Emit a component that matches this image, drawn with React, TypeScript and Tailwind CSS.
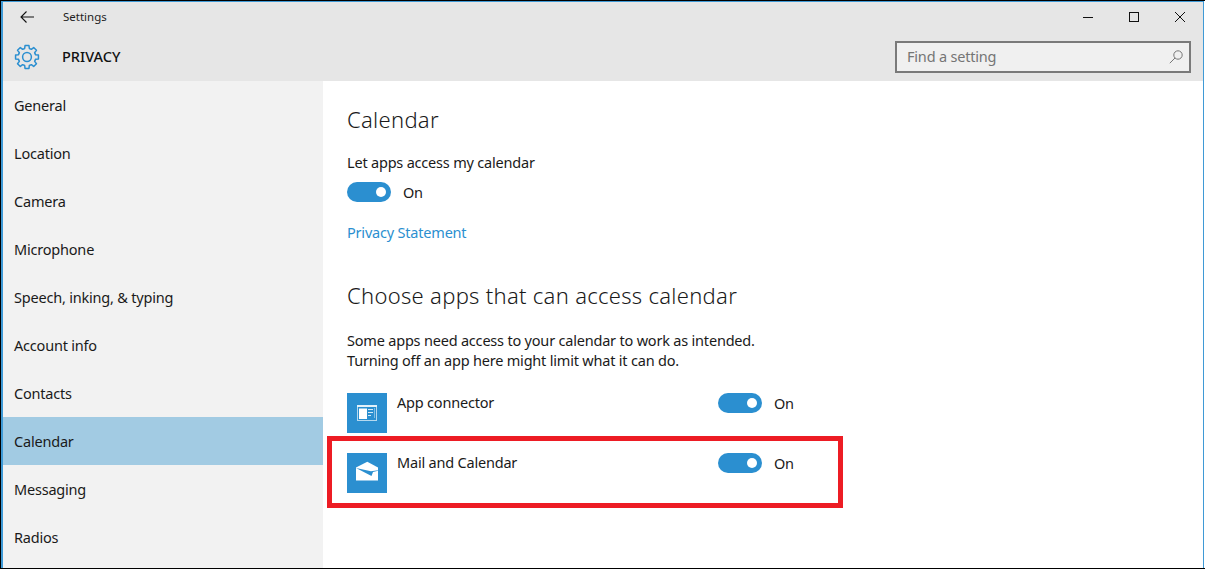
const nav = ["General","Location","Camera","Microphone","Speech, inking, & typing","Account info","Contacts","Calendar","Messaging","Radios"];

const gearPath = (() => {
  const pts: string[] = [];
  const rIn = 8.8;
  const rOut = 11.6;
  for (let i = 0; i < 8; i++) {
    const a = (i * Math.PI) / 4;
    const offs: [number, number][] = [[rIn, -0.27], [rOut, -0.17], [rOut, 0.17], [rIn, 0.27]];
    for (const [r, d] of offs) {
      pts.push(`${(13 + r * Math.cos(a + d)).toFixed(2)} ${(13 + r * Math.sin(a + d)).toFixed(2)}`);
    }
  }
  return `M${pts.join("L")}Z`;
})();

function Toggle() {
  return (
    <div className="flex h-[20px] items-center">
      <div className="flex h-[20px] w-[44px] items-center justify-end rounded-full bg-[#2b8fd0] pr-[5px]">
        <div className="h-[10px] w-[10px] rounded-full bg-white" />
      </div>
      <span className="ml-[12px] text-[14.5px] leading-[20px] tracking-[-0.2px] text-[#1a1a1a]">On</span>
    </div>
  );
}

function AppRow({ name, icon }: { name: string; icon: React.ReactNode }) {
  return (
    <div className="flex h-[40px] items-start">
      <div className="h-[40px] w-[40px] bg-[#2b8fd0]">{icon}</div>
      <div className="ml-[10px] w-[321px] text-[14.5px] leading-[19px] tracking-[-0.2px] text-[#1a1a1a]">{name}</div>
      <Toggle />
    </div>
  );
}

const connectorIcon = (
  <svg width="40" height="40" viewBox="0 0 40 40" fill="none">
    <rect x="10.5" y="12.5" width="19" height="15" stroke="#b5d9ef" strokeWidth="1" />
    <path d="M10 13h20" stroke="#e4f1f9" strokeWidth="2" />
    <rect x="12" y="15.5" width="8" height="10.5" fill="#fff" />
    <path d="M21 16.5h5M21 19.5h5M21 22.5h3" stroke="#d5e9f6" strokeWidth="1" />
    <path d="M27.5 15v10" stroke="#7fbce2" strokeWidth="1" />
  </svg>
);

const mailIcon = (
  <svg width="40" height="40" viewBox="0 0 40 40" fill="none">
    <path d="M9 14.5 20.3 8.8 31 14.5V27.5H9Z" fill="#fff" />
    <path d="M9 15 24 18.2 31 17.2V17.8L26 19 24.5 23Z" fill="#2b8fd0" />
  </svg>
);

export default function App() {
  return (
    <div className="h-[569px] w-[1205px] overflow-hidden border-b border-l border-t border-black bg-white pr-[1px] font-['Noto_Sans',sans-serif] text-[#1a1a1a]">
      <div className="flex h-full flex-col border-l-[2px] border-r border-t border-[#3f9ad6]">
        <header className="h-[79px] shrink-0 bg-[#e6e6e6]">
          <div className="flex h-[30px] items-center">
            <svg className="ml-[17px]" width="14" height="12" viewBox="0 0 14 12" fill="none" stroke="#111" strokeWidth="1.1">
              <path d="M14 6H1M6.5.5 1 6l5.5 5.5" />
            </svg>
            <span className="ml-[29px] text-[11.5px] text-[#222]">Settings</span>
            <div className="ml-auto flex items-center pr-[18px]">
              <svg width="10" height="10" viewBox="0 0 10 10" stroke="#111" strokeWidth="1"><path d="M0 5.5h10" /></svg>
              <svg className="ml-[36px]" width="10" height="10" viewBox="0 0 10 10" fill="none" stroke="#111" strokeWidth="1"><rect x=".5" y=".5" width="9" height="9" /></svg>
              <svg className="ml-[36px]" width="10" height="10" viewBox="0 0 10 10" stroke="#111" strokeWidth="1"><path d="M0 0l10 10M10 0 0 10" /></svg>
            </div>
          </div>
          <div className="flex h-[49px] items-center">
            <svg className="ml-[11px]" width="26" height="26" viewBox="0 0 26 26" fill="none" stroke="#2b8fd0" strokeWidth="1.5" strokeLinejoin="round">
              <path d={gearPath} />
              <circle cx="13" cy="13" r="4.4" />
            </svg>
            <span className="ml-[22px] text-[14.5px] font-medium text-[#111]">PRIVACY</span>
            <div className="ml-auto mr-[12px] flex h-[32px] w-[296px] items-center border-[2px] border-[#7a7a7a] bg-[#f0f0f0] pl-[10px] pr-[6px]">
              <span className="text-[14.5px] tracking-[-0.2px] text-[#757575]">Find a setting</span>
              <svg className="ml-auto" width="14" height="14" viewBox="0 0 14 14" fill="none" stroke="#777" strokeWidth="1">
                <circle cx="9" cy="5" r="4.2" />
                <path d="M6 8 .8 13.2" />
              </svg>
            </div>
          </div>
        </header>
        <div className="flex min-h-0 flex-1">
          <nav className="w-[320px] shrink-0 bg-[#f2f2f2]">
            {nav.map((n) => (
              <div key={n} className={`flex h-[48px] items-center pl-[11px] pt-[2px] text-[14.5px] tracking-[-0.2px] text-[#1a1a1a] ${n === "Calendar" ? "bg-[#a2cbe3]" : ""}`}>
                {n}
              </div>
            ))}
          </nav>
          <main className="pl-[24px]">
            <h1 className="mt-[23px] text-[22px] font-light leading-[30px] tracking-[0.3px] text-[#1a1a1a]">Calendar</h1>
            <p className="mt-[18px] text-[14.5px] leading-[20px] tracking-[-0.2px]">Let apps access my calendar</p>
            <div className="mt-[10px]"><Toggle /></div>
            <p className="mt-[20px] text-[14.5px] leading-[20px] tracking-[-0.2px] text-[#2b8fd0]">Privacy Statement</p>
            <h2 className="mt-[39px] text-[22px] font-light leading-[29px] tracking-[0.3px] text-[#1a1a1a]">Choose apps that can access calendar</h2>
            <p className="mt-[20px] text-[14.5px] leading-[20px] tracking-[-0.2px]">Some apps need access to your calendar to work as intended.<br />Turning off an app here might limit what it can do.</p>
            <div className="mt-[23px]"><AppRow name="App connector" icon={connectorIcon} /></div>
            <div className="ml-[-20px] mt-[3px] h-[72px] w-[516px] border-[5px] border-[#ed1c24] pl-[15px] pt-[12px]">
              <AppRow name="Mail and Calendar" icon={mailIcon} />
            </div>
          </main>
        </div>
      </div>
    </div>
  );
}
